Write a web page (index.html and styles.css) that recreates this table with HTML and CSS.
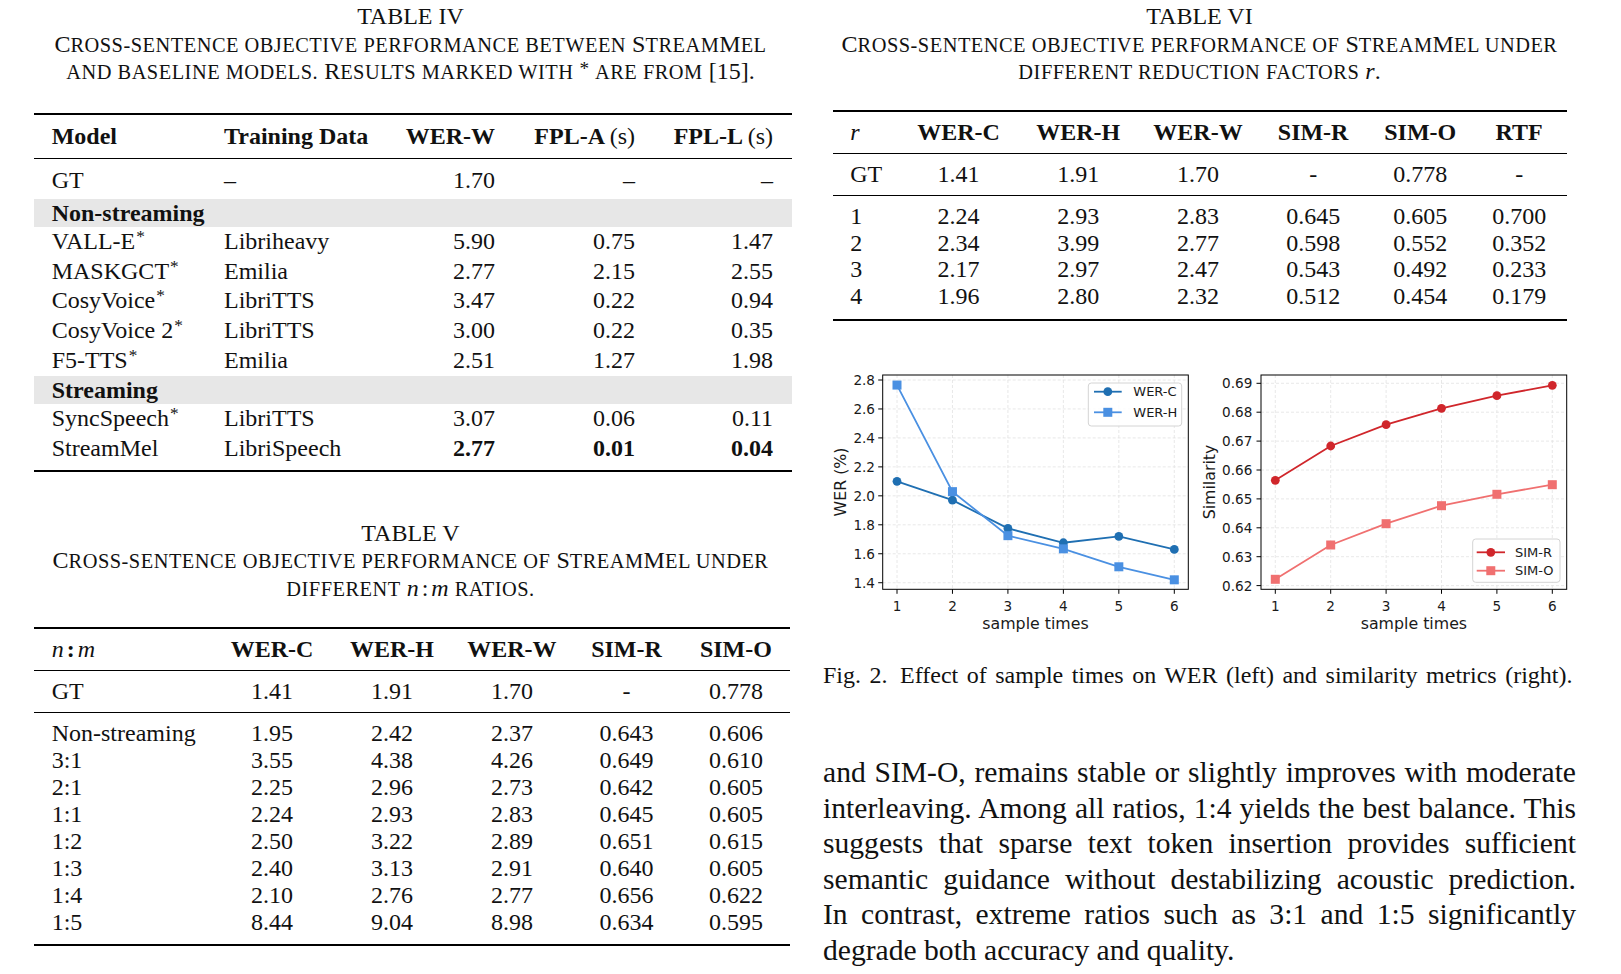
FILE: index.html
```html
<!DOCTYPE html>
<html lang="en">
<head>
<meta charset="utf-8">
<title>StreamMel tables</title>
<link rel="stylesheet" href="styles.css">
</head>
<body>
<div class="page">
  <div class="col col-left">
    <div class="tcap">
      <span class="tlabel">TABLE IV</span>
      <span class="tline">C<span class="sc">ross-sentence objective performance between</span> S<span class="sc">tream</span>M<span class="sc">el</span></span>
      <span class="tline"><span class="sc">and baseline models.</span> R<span class="sc">esults marked with</span> <span class="mast">*</span> <span class="sc">are from</span> [15].</span>
    </div>
    <table class="tbl t4">
      <colgroup>
        <col class="t4c1"><col class="t4c2"><col class="t4c3"><col class="t4c4"><col class="t4c5">
      </colgroup>
      <tr class="hdr">
        <td class="l first">Model</td>
        <td class="l">Training Data</td>
        <td class="r">WER-W</td>
        <td class="r">FPL-A <span class="unit">(s)</span></td>
        <td class="r last">FPL-L <span class="unit">(s)</span></td>
      </tr>
      <tr class="gt">
        <td class="l first">GT</td><td class="l">–</td><td class="r">1.70</td><td class="r">–</td><td class="r last">–</td>
      </tr>
      <tr class="band"><td class="first" colspan="5">Non-streaming</td></tr>
      <tr class="row"><td class="l first">VALL-E<sup class="ast">*</sup></td><td class="l">Libriheavy</td><td class="r">5.90</td><td class="r">0.75</td><td class="r last">1.47</td></tr>
      <tr class="row"><td class="l first">MASKGCT<sup class="ast">*</sup></td><td class="l">Emilia</td><td class="r">2.77</td><td class="r">2.15</td><td class="r last">2.55</td></tr>
      <tr class="row"><td class="l first">CosyVoice<sup class="ast">*</sup></td><td class="l">LibriTTS</td><td class="r">3.47</td><td class="r">0.22</td><td class="r last">0.94</td></tr>
      <tr class="row"><td class="l first">CosyVoice 2<sup class="ast">*</sup></td><td class="l">LibriTTS</td><td class="r">3.00</td><td class="r">0.22</td><td class="r last">0.35</td></tr>
      <tr class="row"><td class="l first">F5-TTS<sup class="ast">*</sup></td><td class="l">Emilia</td><td class="r">2.51</td><td class="r">1.27</td><td class="r last">1.98</td></tr>
      <tr class="band"><td class="first" colspan="5">Streaming</td></tr>
      <tr class="row"><td class="l first">SyncSpeech<sup class="ast">*</sup></td><td class="l">LibriTTS</td><td class="r">3.07</td><td class="r">0.06</td><td class="r last">0.11</td></tr>
      <tr class="row endrow"><td class="l first">StreamMel</td><td class="l">LibriSpeech</td><td class="r"><b>2.77</b></td><td class="r"><b>0.01</b></td><td class="r last"><b>0.04</b></td></tr>
    </table>

    <div class="tcap tcap-v">
      <span class="tlabel">TABLE V</span>
      <span class="tline">C<span class="sc">ross-sentence objective performance of</span> S<span class="sc">tream</span>M<span class="sc">el under</span></span>
      <span class="tline"><span class="sc">different</span> <i class="math">n</i><span class="mcolon">:</span><i class="math">m</i> <span class="sc">ratios.</span></span>
    </div>
    <table class="tbl t5">
      <colgroup>
        <col class="t5c1"><col class="t5c2"><col class="t5c3"><col class="t5c4"><col class="t5c5"><col class="t5c6">
      </colgroup>
      <tr class="hdr">
        <td class="l first"><i class="math">n</i><span class="mcolon">:</span><i class="math">m</i></td>
        <td class="c">WER-C</td><td class="c">WER-H</td><td class="c">WER-W</td><td class="c">SIM-R</td><td class="c">SIM-O</td>
      </tr>
      <tr class="gt">
        <td class="l first">GT</td><td class="c">1.41</td><td class="c">1.91</td><td class="c">1.70</td><td class="c">-</td><td class="c">0.778</td>
      </tr>
      <tr class="row firstrow"><td class="l first">Non-streaming</td><td class="c">1.95</td><td class="c">2.42</td><td class="c">2.37</td><td class="c">0.643</td><td class="c">0.606</td></tr>
      <tr class="row"><td class="l first">3:1</td><td class="c">3.55</td><td class="c">4.38</td><td class="c">4.26</td><td class="c">0.649</td><td class="c">0.610</td></tr>
      <tr class="row"><td class="l first">2:1</td><td class="c">2.25</td><td class="c">2.96</td><td class="c">2.73</td><td class="c">0.642</td><td class="c">0.605</td></tr>
      <tr class="row"><td class="l first">1:1</td><td class="c">2.24</td><td class="c">2.93</td><td class="c">2.83</td><td class="c">0.645</td><td class="c">0.605</td></tr>
      <tr class="row"><td class="l first">1:2</td><td class="c">2.50</td><td class="c">3.22</td><td class="c">2.89</td><td class="c">0.651</td><td class="c">0.615</td></tr>
      <tr class="row"><td class="l first">1:3</td><td class="c">2.40</td><td class="c">3.13</td><td class="c">2.91</td><td class="c">0.640</td><td class="c">0.605</td></tr>
      <tr class="row"><td class="l first">1:4</td><td class="c">2.10</td><td class="c">2.76</td><td class="c">2.77</td><td class="c">0.656</td><td class="c">0.622</td></tr>
      <tr class="row endrow"><td class="l first">1:5</td><td class="c">8.44</td><td class="c">9.04</td><td class="c">8.98</td><td class="c">0.634</td><td class="c">0.595</td></tr>
    </table>
  </div>

  <div class="col col-right">
    <div class="tcap">
      <span class="tlabel">TABLE VI</span>
      <span class="tline">C<span class="sc">ross-sentence objective performance of</span> S<span class="sc">tream</span>M<span class="sc">el under</span></span>
      <span class="tline"><span class="sc">different reduction factors</span> <i class="math">r</i>.</span>
    </div>
    <table class="tbl t6">
      <colgroup>
        <col class="t6c1"><col class="t6c2"><col class="t6c3"><col class="t6c4"><col class="t6c5"><col class="t6c6"><col class="t6c7">
      </colgroup>
      <tr class="hdr">
        <td class="l first"><i class="math">r</i></td>
        <td class="c">WER-C</td><td class="c">WER-H</td><td class="c">WER-W</td><td class="c">SIM-R</td><td class="c">SIM-O</td><td class="c">RTF</td>
      </tr>
      <tr class="gt">
        <td class="l first">GT</td><td class="c">1.41</td><td class="c">1.91</td><td class="c">1.70</td><td class="c">-</td><td class="c">0.778</td><td class="c">-</td>
      </tr>
      <tr class="row firstrow"><td class="l first">1</td><td class="c">2.24</td><td class="c">2.93</td><td class="c">2.83</td><td class="c">0.645</td><td class="c">0.605</td><td class="c">0.700</td></tr>
      <tr class="row"><td class="l first">2</td><td class="c">2.34</td><td class="c">3.99</td><td class="c">2.77</td><td class="c">0.598</td><td class="c">0.552</td><td class="c">0.352</td></tr>
      <tr class="row"><td class="l first">3</td><td class="c">2.17</td><td class="c">2.97</td><td class="c">2.47</td><td class="c">0.543</td><td class="c">0.492</td><td class="c">0.233</td></tr>
      <tr class="row endrow"><td class="l first">4</td><td class="c">1.96</td><td class="c">2.80</td><td class="c">2.32</td><td class="c">0.512</td><td class="c">0.454</td><td class="c">0.179</td></tr>
    </table>

    <figure class="fig">
      <div class="plots">
        <svg class="plot" width="377" height="280" viewBox="0 0 377 280">
          <g class="grid">
            <line x1="74" y1="15" x2="74" y2="229.3"/>
            <line x1="129.46" y1="15" x2="129.46" y2="229.3"/>
            <line x1="184.92" y1="15" x2="184.92" y2="229.3"/>
            <line x1="240.38" y1="15" x2="240.38" y2="229.3"/>
            <line x1="295.84" y1="15" x2="295.84" y2="229.3"/>
            <line x1="351.3" y1="15" x2="351.3" y2="229.3"/>
            <line x1="59.7" y1="20" x2="365.3" y2="20"/>
            <line x1="59.7" y1="48.96" x2="365.3" y2="48.96"/>
            <line x1="59.7" y1="77.92" x2="365.3" y2="77.92"/>
            <line x1="59.7" y1="106.88" x2="365.3" y2="106.88"/>
            <line x1="59.7" y1="135.84" x2="365.3" y2="135.84"/>
            <line x1="59.7" y1="164.8" x2="365.3" y2="164.8"/>
            <line x1="59.7" y1="193.76" x2="365.3" y2="193.76"/>
            <line x1="59.7" y1="222.72" x2="365.3" y2="222.72"/>
          </g>
          <g class="ticks">
            <line x1="55.2" y1="20" x2="59.7" y2="20"/>
            <line x1="55.2" y1="48.96" x2="59.7" y2="48.96"/>
            <line x1="55.2" y1="77.92" x2="59.7" y2="77.92"/>
            <line x1="55.2" y1="106.88" x2="59.7" y2="106.88"/>
            <line x1="55.2" y1="135.84" x2="59.7" y2="135.84"/>
            <line x1="55.2" y1="164.8" x2="59.7" y2="164.8"/>
            <line x1="55.2" y1="193.76" x2="59.7" y2="193.76"/>
            <line x1="55.2" y1="222.72" x2="59.7" y2="222.72"/>
            <line x1="74" y1="229.3" x2="74" y2="233.8"/>
            <line x1="129.46" y1="229.3" x2="129.46" y2="233.8"/>
            <line x1="184.92" y1="229.3" x2="184.92" y2="233.8"/>
            <line x1="240.38" y1="229.3" x2="240.38" y2="233.8"/>
            <line x1="295.84" y1="229.3" x2="295.84" y2="233.8"/>
            <line x1="351.3" y1="229.3" x2="351.3" y2="233.8"/>
          </g>
          <g class="ylab">
            <text x="52" y="20">2.8</text>
            <text x="52" y="48.96">2.6</text>
            <text x="52" y="77.92">2.4</text>
            <text x="52" y="106.88">2.2</text>
            <text x="52" y="135.84">2.0</text>
            <text x="52" y="164.8">1.8</text>
            <text x="52" y="193.76">1.6</text>
            <text x="52" y="222.72">1.4</text>
          </g>
          <g class="xlab">
            <text x="74" y="245.7">1</text>
            <text x="129.46" y="245.7">2</text>
            <text x="184.92" y="245.7">3</text>
            <text x="240.38" y="245.7">4</text>
            <text x="295.84" y="245.7">5</text>
            <text x="351.3" y="245.7">6</text>
          </g>
          <text class="axtitle" x="212.5" y="263.3">sample times</text>
          <text class="axtitle" x="17" y="122" transform="rotate(-90 17 122)">WER (%)</text>
          <polyline class="ln ln-c" points="74,121.36 129.46,140.18 184.92,168.42 240.38,182.76 295.84,176.38 351.3,189.42"/>
          <g class="mk-c">
            <circle cx="74" cy="121.36" r="4.4"/>
            <circle cx="129.46" cy="140.18" r="4.4"/>
            <circle cx="184.92" cy="168.42" r="4.4"/>
            <circle cx="240.38" cy="182.76" r="4.4"/>
            <circle cx="295.84" cy="176.38" r="4.4"/>
            <circle cx="351.3" cy="189.42" r="4.4"/>
          </g>
          <polyline class="ln ln-h" points="74,25.07 129.46,131.64 184.92,175.66 240.38,188.84 295.84,206.79 351.3,219.82"/>
          <g class="mk-h">
            <rect x="69.5" y="20.57" width="9" height="9"/>
            <rect x="124.96" y="127.14" width="9" height="9"/>
            <rect x="180.42" y="171.16" width="9" height="9"/>
            <rect x="235.88" y="184.34" width="9" height="9"/>
            <rect x="291.34" y="202.29" width="9" height="9"/>
            <rect x="346.8" y="215.32" width="9" height="9"/>
          </g>
          <rect class="axes" x="59.7" y="15" width="305.6" height="214.3"/>
          <rect class="legend" x="265.3" y="23" width="93.4" height="43" rx="3"/>
          <line class="ln ln-c" x1="271" y1="31.7" x2="298.7" y2="31.7"/>
          <circle class="mk-c" cx="284.8" cy="31.7" r="4.4"/>
          <text class="legtxt" x="310.3" y="31.7">WER-C</text>
          <line class="ln ln-h" x1="271" y1="52.3" x2="298.7" y2="52.3"/>
          <rect class="mk-h" x="280.3" y="47.8" width="9" height="9"/>
          <text class="legtxt" x="310.3" y="52.3">WER-H</text>
        </svg>
        <svg class="plot" width="376" height="280" viewBox="0 0 376 280">
          <g class="grid">
            <line x1="75.3" y1="15" x2="75.3" y2="229.3"/>
            <line x1="130.7" y1="15" x2="130.7" y2="229.3"/>
            <line x1="186.1" y1="15" x2="186.1" y2="229.3"/>
            <line x1="241.5" y1="15" x2="241.5" y2="229.3"/>
            <line x1="296.9" y1="15" x2="296.9" y2="229.3"/>
            <line x1="352.3" y1="15" x2="352.3" y2="229.3"/>
            <line x1="61" y1="23.3" x2="366.7" y2="23.3"/>
            <line x1="61" y1="52.2" x2="366.7" y2="52.2"/>
            <line x1="61" y1="81.1" x2="366.7" y2="81.1"/>
            <line x1="61" y1="110" x2="366.7" y2="110"/>
            <line x1="61" y1="138.9" x2="366.7" y2="138.9"/>
            <line x1="61" y1="167.8" x2="366.7" y2="167.8"/>
            <line x1="61" y1="196.7" x2="366.7" y2="196.7"/>
            <line x1="61" y1="225.6" x2="366.7" y2="225.6"/>
          </g>
          <g class="ticks">
            <line x1="56.5" y1="23.3" x2="61" y2="23.3"/>
            <line x1="56.5" y1="52.2" x2="61" y2="52.2"/>
            <line x1="56.5" y1="81.1" x2="61" y2="81.1"/>
            <line x1="56.5" y1="110" x2="61" y2="110"/>
            <line x1="56.5" y1="138.9" x2="61" y2="138.9"/>
            <line x1="56.5" y1="167.8" x2="61" y2="167.8"/>
            <line x1="56.5" y1="196.7" x2="61" y2="196.7"/>
            <line x1="56.5" y1="225.6" x2="61" y2="225.6"/>
            <line x1="75.3" y1="229.3" x2="75.3" y2="233.8"/>
            <line x1="130.7" y1="229.3" x2="130.7" y2="233.8"/>
            <line x1="186.1" y1="229.3" x2="186.1" y2="233.8"/>
            <line x1="241.5" y1="229.3" x2="241.5" y2="233.8"/>
            <line x1="296.9" y1="229.3" x2="296.9" y2="233.8"/>
            <line x1="352.3" y1="229.3" x2="352.3" y2="233.8"/>
          </g>
          <g class="ylab">
            <text x="52.3" y="23.3">0.69</text>
            <text x="52.3" y="52.2">0.68</text>
            <text x="52.3" y="81.1">0.67</text>
            <text x="52.3" y="110">0.66</text>
            <text x="52.3" y="138.9">0.65</text>
            <text x="52.3" y="167.8">0.64</text>
            <text x="52.3" y="196.7">0.63</text>
            <text x="52.3" y="225.6">0.62</text>
          </g>
          <g class="xlab">
            <text x="75.3" y="245.7">1</text>
            <text x="130.7" y="245.7">2</text>
            <text x="186.1" y="245.7">3</text>
            <text x="241.5" y="245.7">4</text>
            <text x="296.9" y="245.7">5</text>
            <text x="352.3" y="245.7">6</text>
          </g>
          <text class="axtitle" x="213.9" y="263.3">sample times</text>
          <text class="axtitle" x="9.5" y="122" transform="rotate(-90 9.5 122)">Similarity</text>
          <polyline class="ln ln-r" points="75.3,120.3 130.7,86 186.1,64.7 241.5,48.3 296.9,35.7 352.3,25.3"/>
          <g class="mk-r">
            <circle cx="75.3" cy="120.3" r="4.4"/>
            <circle cx="130.7" cy="86" r="4.4"/>
            <circle cx="186.1" cy="64.7" r="4.4"/>
            <circle cx="241.5" cy="48.3" r="4.4"/>
            <circle cx="296.9" cy="35.7" r="4.4"/>
            <circle cx="352.3" cy="25.3" r="4.4"/>
          </g>
          <polyline class="ln ln-o" points="75.3,219.3 130.7,185 186.1,163.7 241.5,145.7 296.9,134.3 352.3,124.7"/>
          <g class="mk-o">
            <rect x="70.8" y="214.8" width="9" height="9"/>
            <rect x="126.2" y="180.5" width="9" height="9"/>
            <rect x="181.6" y="159.2" width="9" height="9"/>
            <rect x="237" y="141.2" width="9" height="9"/>
            <rect x="292.4" y="129.8" width="9" height="9"/>
            <rect x="347.8" y="120.2" width="9" height="9"/>
          </g>
          <rect class="axes" x="61" y="15" width="305.7" height="214.3"/>
          <rect class="legend" x="272.7" y="179" width="87.3" height="43.3" rx="3"/>
          <line class="ln ln-r" x1="276.7" y1="192.3" x2="305" y2="192.3"/>
          <circle class="mk-r" cx="290.8" cy="192.3" r="4.4"/>
          <text class="legtxt" x="315" y="192.3">SIM-R</text>
          <line class="ln ln-o" x1="276.7" y1="210.7" x2="305" y2="210.7"/>
          <rect class="mk-o" x="286.3" y="206.2" width="9" height="9"/>
          <text class="legtxt" x="315" y="210.7">SIM-O</text>
        </svg>
      </div>
      <figcaption class="figcap">Fig. 2.<span class="figsep"></span>Effect of sample times on WER (left) and similarity metrics (right).</figcaption>
    </figure>

    <p class="para">
      <span class="pl">and SIM-O, remains stable or slightly improves with moderate</span>
      <span class="pl">interleaving. Among all ratios, 1:4 yields the best balance. This</span>
      <span class="pl">suggests that sparse text token insertion provides sufficient</span>
      <span class="pl">semantic guidance without destabilizing acoustic prediction.</span>
      <span class="pl">In contrast, extreme ratios such as 3:1 and 1:5 significantly</span>
      <span class="pl pl-last">degrade both accuracy and quality.</span>
    </p>
  </div>
</div>
</body>
</html>
```

FILE: styles.css
```css
html, body {
  margin: 0;
  padding: 0;
  background: #ffffff;
}

body {
  font-family: "Liberation Serif", "Times New Roman", serif;
  color: #111111;
}

.page {
  display: flex;
  gap: 36px;
  padding-left: 34px;
  width: 1621px;
  box-sizing: border-box;
}

.col {
  width: 753px;
  flex: none;
}

/* ---------- table captions ---------- */
.tcap {
  text-align: center;
  font-size: 24px;
  line-height: 27.5px;
  padding-top: 3px;
}

.tcap .tlabel,
.tcap .tline {
  display: block;
  white-space: nowrap;
  height: 27.5px;
}

.tcap .sc {
  text-transform: uppercase;
  font-size: 20.4px;
  letter-spacing: 0.5px;
  line-height: 0;
}

.tcap-v {
  margin-top: 47.8px;
  padding-top: 0;
}

.math {
  font-style: italic;
}

.mcolon {
  padding: 0 3px;
}

.mast {
  font-size: 0.8em;
  line-height: 0;
  position: relative;
  top: -0.2em;
}

/* ---------- tables ---------- */
.tbl {
  border-collapse: collapse;
  table-layout: fixed;
  border-top: 2px solid #000;
  border-bottom: 2px solid #000;
  font-size: 24px;
}

.tbl td {
  padding: 0;
  white-space: nowrap;
}

.tbl td.l { text-align: left; }
.tbl td.r { text-align: right; }
.tbl td.c { text-align: center; }
.tbl td.first { padding-left: 17.7px; }

.tbl .hdr td {
  font-weight: bold;
  border-bottom: 1px solid #000;
}

.tbl .hdr .unit,
.tbl .hdr .math {
  font-weight: normal;
}

.ast {
  font-size: 0.72em;
  line-height: 0;
  vertical-align: 0.42em;
  margin-left: 1px;
}

/* Table IV */
.t4 {
  width: 758px;
  margin-top: 27px;
}

.t4c1 { width: 190px; }
.t4c2 { width: 176px; }
.t4c3 { width: 95px; }
.t4c4 { width: 140px; }
.t4c5 { width: 157px; }

.t4 td.last { padding-right: 19px; }

.t4 .hdr td {
  line-height: 29.6px;
  padding-top: 7px;
  padding-bottom: 7px;
}

.t4 .gt td {
  line-height: 29.6px;
  padding-top: 7.4px;
  padding-bottom: 2.5px;
}

.t4 .band td {
  background: #e7e7e7;
  font-weight: bold;
  line-height: 28.5px;
}

.t4 .row td {
  line-height: 29.7px;
}

.t4 .endrow td {
  padding-bottom: 6.5px;
}

/* Table V */
.t5 {
  width: 756px;
  margin-top: 24.5px;
}

.t5c1 { width: 178.5px; }
.t5c2 { width: 119px; }
.t5c3 { width: 121px; }
.t5c4 { width: 118.75px; }
.t5c5 { width: 110.5px; }
.t5c6 { width: 108.25px; }

.t5 .hdr td {
  line-height: 27px;
  padding-top: 7px;
  padding-bottom: 7px;
}

.t5 .gt td {
  line-height: 27px;
  padding-top: 7.3px;
  padding-bottom: 7.3px;
  border-bottom: 1px solid #000;
}

.t5 .row td {
  line-height: 26.95px;
}

.t5 .firstrow td { padding-top: 7px; }
.t5 .endrow td { padding-bottom: 7.8px; }

/* Table VI */
.t6 {
  width: 734px;
  margin: 24px auto 0;
}

.t6c1 { width: 66.5px; }
.t6c2 { width: 119px; }
.t6c3 { width: 120.5px; }
.t6c4 { width: 119px; }
.t6c5 { width: 111.25px; }
.t6c6 { width: 103px; }
.t6c7 { width: 94.75px; }

.t6 .hdr td {
  line-height: 27px;
  padding-top: 7.4px;
  padding-bottom: 7.4px;
}

.t6 .gt td {
  line-height: 27px;
  padding-top: 6.3px;
  padding-bottom: 7.9px;
  border-bottom: 1px solid #000;
}

.t6 .row td {
  line-height: 26.6px;
}

.t6 .firstrow td { padding-top: 6.7px; }
.t6 .endrow td { padding-bottom: 9.2px; }

/* ---------- figure ---------- */
.fig {
  margin: 38.8px 0 0;
  padding: 0;
}

.plots {
  display: flex;
  height: 280px;
}

.plot {
  display: block;
  flex: none;
}

.plot text {
  font-family: "DejaVu Sans", sans-serif;
  fill: #1a1a1a;
  dominant-baseline: central;
}

.plot .grid line {
  stroke: #e2e2e2;
  stroke-width: 0.8;
  stroke-dasharray: 3 2;
}

.plot .ticks line {
  stroke: #000;
  stroke-width: 1;
}

.plot .ylab text {
  font-size: 13.6px;
  text-anchor: end;
}

.plot .xlab text {
  font-size: 13.6px;
  text-anchor: middle;
}

.plot .axtitle {
  font-size: 15.8px;
  text-anchor: middle;
}

.plot .legtxt {
  font-size: 13px;
}

.plot .axes {
  fill: none;
  stroke: #000;
  stroke-width: 1;
}

.plot .legend {
  fill: #ffffff;
  fill-opacity: 0.85;
  stroke: #d4d4d4;
  stroke-width: 1;
}

.plot .ln {
  fill: none;
  stroke-width: 1.8;
}

.plot .ln-c { stroke: #1f6fb2; }
.plot .ln-h { stroke: #4a90e2; }
.plot .ln-r { stroke: #d0262b; }
.plot .ln-o { stroke: #f07070; }

.plot .mk-c, .plot .mk-c circle { fill: #1f6fb2; }
.plot .mk-h, .plot .mk-h rect { fill: #4a90e2; }
.plot .mk-r, .plot .mk-r circle { fill: #d0262b; }
.plot .mk-o, .plot .mk-o rect { fill: #f07070; }

.figcap {
  margin-top: 22px;
  width: 749.5px;
  font-size: 24px;
  line-height: 27.5px;
  text-align: justify;
  text-align-last: justify;
}

.figsep {
  display: inline-block;
  width: 12.6px;
}

/* ---------- body paragraph ---------- */
.para {
  margin: 66px 0 0;
  font-size: 29.6px;
  line-height: 35.5px;
}

.para .pl {
  display: block;
  text-align: justify;
  text-align-last: justify;
}

.para .pl-last {
  text-align-last: left;
}
```
